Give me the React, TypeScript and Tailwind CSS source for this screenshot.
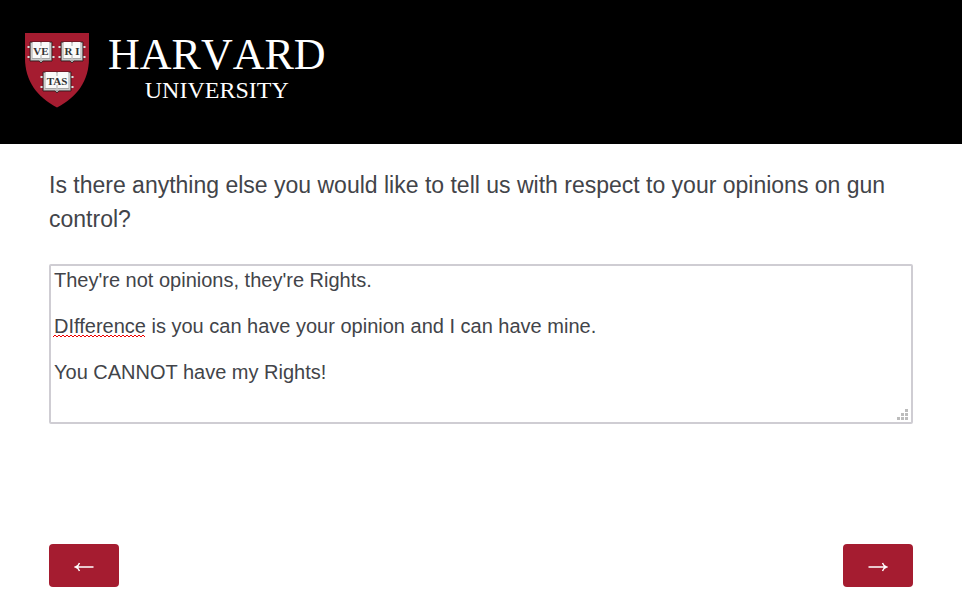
import { useState } from "react";

const INITIAL_ANSWER = `They're not opinions, they're Rights.

DIfference is you can have your opinion and I can have mine.

You CANNOT have my Rights!`;

function Book({ x, y, width, label }: { x: number; y: number; width: number; label: string }) {
  const mid = width / 2;
  return (
    <g transform={`translate(${x} ${y})`}>
      <path
        d={`M-2.500 5H0M-2.500 15H0M${width} 5h2.500M${width} 15h2.500`}
        stroke="#dedede"
        strokeWidth="2.200"
      />
      <path
        d={`M0 0H${width}V19H${mid + 2}L${mid} 21L${mid - 2} 19H0Z`}
        fill="#a8a8a8"
        stroke="#2b1518"
        strokeWidth="0.800"
      />
      <path d={`M2.500 0H${mid - 1}L${mid} 1L${mid + 1} 0H${width - 2.5}V16H${mid + 1}L${mid} 17L${mid - 1} 16H2.500Z`} fill="#fafafa" />
      <path d={`M${mid} 1V4M${mid} 13V18`} stroke="#9a9a9a" strokeWidth="0.800" />
      <path d={`M1.500 1V17.500H${width - 1.5}V1`} fill="none" stroke="#e4e4e4" strokeWidth="0.600" />
      <text
        x={mid}
        y="12.500"
        textAnchor="middle"
        fontSize="11"
        fontWeight="700"
        fill="#333333"
        xmlSpace="preserve"
        className="font-['Liberation_Serif',serif]"
      >
        {label}
      </text>
    </g>
  );
}

function Shield() {
  return (
    <svg width="66" height="76" viewBox="0 0 66 76" aria-hidden="true" className="shrink-0">
      <path d="M1 1h64v25c0 23-12 39-32 49.500C13 65 1 49 1 26z" fill="#a51c30" />
      <Book x={6} y={10} width={22} label="VE" />
      <Book x={37} y={10} width={22} label="R I" />
      <Book x={19} y={40} width={28} label="TAS" />
    </svg>
  );
}

function Squiggle() {
  return (
    <svg width="92" height="4" aria-hidden="true" className="pointer-events-none absolute top-[70px] left-1">
      <defs>
        <pattern id="wave" width="4" height="4" patternUnits="userSpaceOnUse">
          <path d="M-1 2L0 3L2 1L4 3L5 2" fill="none" stroke="#f00000" />
        </pattern>
      </defs>
      <rect width="92" height="4" fill="url(#wave)" />
    </svg>
  );
}

function ResizeGrip() {
  return (
    <svg width="12" height="12" fill="#bcbcbc" aria-hidden="true" className="pointer-events-none absolute right-1 bottom-[3px]">
      <path d="M8 0h3v3H8zM4 4h3v3H4zM8 4h3v3H8zM0 8h3v3H0zM4 8h3v3H4zM8 8h3v3H8z" />
    </svg>
  );
}

function NavButton({ label, path }: { label: string; path: string }) {
  return (
    <button type="button" aria-label={label} className="flex h-[43px] w-[70px] items-center justify-center rounded bg-[#a51c30] text-white">
      <svg width="20" height="10" viewBox="0 0 20 10" fill="none" stroke="currentColor" strokeWidth="1.400" aria-hidden="true" className="mt-0.5">
        <path d={path} />
      </svg>
    </button>
  );
}

export default function App() {
  const [answer, setAnswer] = useState(INITIAL_ANSWER);

  return (
    <div className="min-h-screen bg-white font-['Liberation_Sans',Arial,sans-serif] text-[#424449]">
      <header className="flex h-36 items-start gap-[18px] bg-black px-6 pt-8 text-white">
        <Shield />
        <div className="flex flex-col items-center font-['Liberation_Serif',serif] [font-kerning:none]">
          <span className="text-[44px] leading-[46px]">HARVARD</span>
          <span className="text-2xl leading-6">UNIVERSITY</span>
        </div>
      </header>
      <main className="px-[49px] pt-6 pb-6">
        <form onSubmit={(event) => event.preventDefault()}>
          <label htmlFor="answer" className="block text-[23px] leading-[34px]">
            Is there anything else you would like to tell us with respect to your opinions on gun control?
          </label>
          <div className="relative mt-7">
            <textarea
              id="answer"
              value={answer}
              onChange={(event) => setAnswer(event.target.value)}
              spellCheck={false}
              className="block h-40 w-full resize-none rounded-xs border-2 border-[#cfcdd3] bg-white p-[3px] text-xl leading-[23px] outline-none"
            />
            <Squiggle />
            <ResizeGrip />
          </div>
          <div className="mt-[120px] flex justify-between">
            <NavButton label="Previous" path="M19.500 5H2M5.500 1Q4.500 4 1.500 5Q4.500 6 5.500 9" />
            <NavButton label="Next" path="M0.500 5H18M14.500 1Q15.500 4 18.500 5Q15.500 6 14.500 9" />
          </div>
        </form>
      </main>
    </div>
  );
}
